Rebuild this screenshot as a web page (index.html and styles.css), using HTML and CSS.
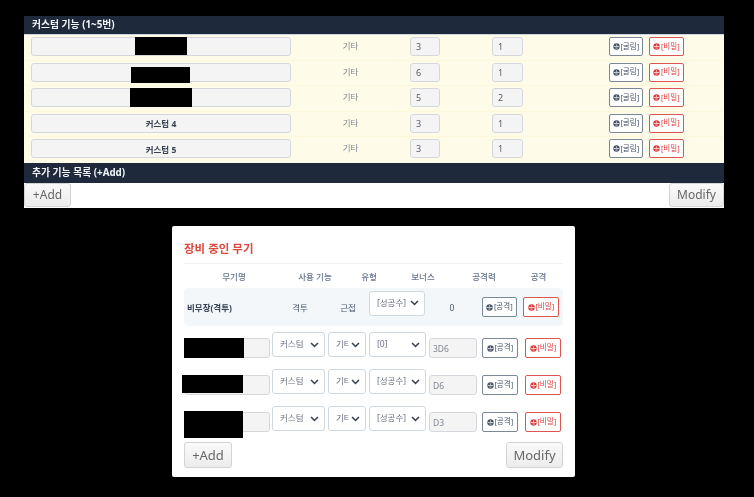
FILE: index.html
```html
<!DOCTYPE html>
<html lang="ko">
<head>
<meta charset="utf-8">
<title>장비 중인 무기</title>
<link rel="stylesheet" href="styles.css">
</head>
<body>
<svg class="defs" width="0" height="0" aria-hidden="true"><defs>
<symbol id="ico" viewBox="0 0 10 10"><circle cx="5" cy="5" r="4.6" fill="currentColor"/><path d="M1 5h8M5 2v2M3.5 7.2h3" stroke="#fff" stroke-width="1"/></symbol>
</defs></svg>

<section class="panel-top">
  <h2 class="bar">커스텀 기능 (1~5번)</h2>
  <div class="rows">
    <div class="row">
      <div class="name-cell"><input class="name" value=""><span class="mask m1"></span></div>
      <span class="kind">기타</span>
      <input class="num n1" value="3"><input class="num n2" value="1">
      <span class="acts"><button class="act plain"><svg class="i"><use href="#ico"/></svg>[굴림]</button><button class="act secret"><svg class="i"><use href="#ico"/></svg>[비밀]</button></span>
    </div>
    <div class="row">
      <div class="name-cell"><input class="name" value=""><span class="mask m2"></span></div>
      <span class="kind">기타</span>
      <input class="num n1" value="6"><input class="num n2" value="1">
      <span class="acts"><button class="act plain"><svg class="i"><use href="#ico"/></svg>[굴림]</button><button class="act secret"><svg class="i"><use href="#ico"/></svg>[비밀]</button></span>
    </div>
    <div class="row">
      <div class="name-cell"><input class="name" value=""><span class="mask m3"></span></div>
      <span class="kind">기타</span>
      <input class="num n1" value="5"><input class="num n2" value="2">
      <span class="acts"><button class="act plain"><svg class="i"><use href="#ico"/></svg>[굴림]</button><button class="act secret"><svg class="i"><use href="#ico"/></svg>[비밀]</button></span>
    </div>
    <div class="row">
      <div class="name-cell"><input class="name" value="커스텀 4"></div>
      <span class="kind">기타</span>
      <input class="num n1" value="3"><input class="num n2" value="1">
      <span class="acts"><button class="act plain"><svg class="i"><use href="#ico"/></svg>[굴림]</button><button class="act secret"><svg class="i"><use href="#ico"/></svg>[비밀]</button></span>
    </div>
    <div class="row">
      <div class="name-cell"><input class="name" value="커스텀 5"></div>
      <span class="kind">기타</span>
      <input class="num n1" value="3"><input class="num n2" value="1">
      <span class="acts"><button class="act plain"><svg class="i"><use href="#ico"/></svg>[굴림]</button><button class="act secret"><svg class="i"><use href="#ico"/></svg>[비밀]</button></span>
    </div>
  </div>
  <h2 class="bar bar2">추가 기능 목록 (+Add)</h2>
  <div class="foot-top"><button class="flat">+Add</button><button class="flat">Modify</button></div>
</section>

<section class="panel-weapons">
  <h2 class="title">장비 중인 무기</h2>
  <div class="grid head">
    <span class="h-name">무기명</span><span class="h-use">사용 기능</span><span class="h-type">유형</span><span class="h-bonus">보너스</span><span class="h-power">공격력</span><span class="h-atk">공격</span>
  </div>
  <div class="first">
    <strong class="w-name">비무장(격투)</strong><span class="w-use">격투</span><span class="w-type">근접</span>
    <select class="sel s-bonus"><option>[성공수]</option></select>
    <span class="w-power">0</span>
    <button class="act plain big"><svg class="i"><use href="#ico"/></svg>[공격]</button>
    <button class="act secret big"><svg class="i"><use href="#ico"/></svg>[비밀]</button>
  </div>
  <div class="wrow r1">
    <div class="wname"><input class="name2"><span class="mask w1"></span></div>
    <select class="sel s-use"><option>커스텀</option></select><select class="sel s-type"><option>기타</option></select><select class="sel s-b2"><option>[0]</option></select>
    <input class="dmg" value="3D6">
    <button class="act plain big"><svg class="i"><use href="#ico"/></svg>[공격]</button>
    <button class="act secret big"><svg class="i"><use href="#ico"/></svg>[비밀]</button>
  </div>
  <div class="wrow r2">
    <div class="wname"><input class="name2"><span class="mask w2"></span></div>
    <select class="sel s-use"><option>커스텀</option></select><select class="sel s-type"><option>기타</option></select><select class="sel s-b2"><option>[성공수]</option></select>
    <input class="dmg" value="D6">
    <button class="act plain big"><svg class="i"><use href="#ico"/></svg>[공격]</button>
    <button class="act secret big"><svg class="i"><use href="#ico"/></svg>[비밀]</button>
  </div>
  <div class="wrow r3">
    <div class="wname"><input class="name2"><span class="mask w3"></span></div>
    <select class="sel s-use"><option>커스텀</option></select><select class="sel s-type"><option>기타</option></select><select class="sel s-b2"><option>[성공수]</option></select>
    <input class="dmg" value="D3">
    <button class="act plain big"><svg class="i"><use href="#ico"/></svg>[공격]</button>
    <button class="act secret big"><svg class="i"><use href="#ico"/></svg>[비밀]</button>
  </div>
  <div class="foot-w"><button class="flat large">+Add</button><button class="flat large">Modify</button></div>
</section>
</body>
</html>
```
FILE: styles.css
```css
* { box-sizing: border-box; }
html, body { margin: 0; padding: 0; }
body {
  background: #000;
  height: 497px;
  overflow: hidden;
  font-family: "Noto Sans", "Noto Sans CJK KR", sans-serif;
  padding-top: 16px;
}
.defs { position: absolute; }
input, select, button { font-family: inherit; margin: 0; outline: none; }

/* top panel */
.panel-top { width: 700px; margin-left: 24px; background: #fff; filter: blur(0.3px); }
.bar {
  margin: 0; height: 18px; line-height: 17px; padding-left: 8px;
  background: #1e293b; color: #f1f5f9;
  font-size: 9.8px; font-weight: 700;
}
.bar2 { height: 20px; line-height: 19px; }
.rows { background: #fefce8; border-top: 1px solid #cbd5e1; }
.row {
  display: flex; align-items: flex-start;
  height: 25.5px; padding: 2px 0 0 7px;
  border-bottom: 1px solid #fdf8d8;
}
.row:last-child { border-bottom: 0; }
.name-cell { position: relative; width: 260px; flex: none; }
.name {
  display: block; width: 100%; height: 19px; padding: 0;
  background: #f4f4f4; border: 1px solid #d4d7db; border-radius: 3px;
  text-align: center; font-size: 8.5px; font-weight: 700; color: #374151;
}
.mask { position: absolute; background: #000; }
.m1 { left: 104px; top: 0; width: 52px; height: 18px; }
.m2 { left: 100px; top: 4px; width: 59px; height: 16px; }
.m3 { left: 99px; top: 0; width: 62px; height: 19px; }
.kind { width: 119px; line-height: 17px; text-align: center; font-size: 8.5px; color: #808690; flex: none; }
.num {
  flex: none; height: 19px; padding: 0 0 0 5px;
  background: #f4f4f4; border: 1px solid #d4d7db; border-radius: 3px;
  font-size: 9px; color: #555c66;
}
.n1 { width: 30px; }
.n2 { width: 31px; margin-left: 52px; }
.acts { display: flex; gap: 6px; margin-left: 86px; }
.act {
  display: inline-flex; align-items: center; justify-content: center;
  width: 34px; height: 19px; padding: 0;
  background: #fff; border: 1px solid #7b8898; border-radius: 2px;
  font-size: 7.5px; line-height: 1; color: #475569; white-space: nowrap;
}
.act.secret { width: 35px; border-color: #dd5550; color: #dc3c3c; }
.i { width: 7px; height: 7px; flex: none; margin-right: 0.5px; }
.plain .i { color: #475569; }
.foot-top { display: flex; justify-content: space-between; height: 25.5px; }
.flat {
  background: linear-gradient(#fafafa, #ececec);
  border: 1px solid #d4d4d4; border-radius: 3px;
  color: #666; font-size: 12px; height: 24px; padding: 0;
}
.foot-top .flat:first-child { width: 47px; }
.foot-top .flat:last-child { width: 55px; }

/* weapons panel */
.panel-weapons {
  width: 403px; height: 251px; margin: 18px 0 0 172px;
  background: #fff; border-radius: 2px; padding: 0 12px;
  filter: blur(0.3px);
}
.title {
  margin: 0; height: 38px; padding-top: 14px;
  border-bottom: 1px solid #eef0f3;
  font-size: 11.5px; line-height: 17px; font-weight: 700; color: #dc4a3d;
}
.grid { display: grid; }
.head {
  grid-template-columns: 100px 62px 46px 62px 60px 49px;
  height: 24px; align-items: center; text-align: center;
  font-size: 8.5px; color: #64748b; font-weight: 500;
}
.first {
  display: flex; align-items: center; height: 38px;
  background: #f4f7fa; border-radius: 4px; padding-left: 3px;
  font-size: 8.5px; color: #475569;
}
.w-name { width: 96px; font-weight: 700; color: #334155; }
.w-use { width: 30px; text-align: center; margin-left: 2px; }
.w-type { width: 20px; margin-left: 23px; text-align: center; }
.sel {
  appearance: none; -webkit-appearance: none; flex: none;
  background: #fff url("data:image/svg+xml,%3Csvg xmlns='http://www.w3.org/2000/svg' viewBox='0 0 10 7'%3E%3Cpath d='M1 1.2l4 4 4-4' fill='none' stroke='%23374151' stroke-width='1.9'/%3E%3C/svg%3E") no-repeat right 5px center / 9px 6px;
  border: 1px solid #d1d9e0; border-radius: 3px;
  font-size: 8.5px; color: #6b7280;
  height: 25px; padding: 0 16px 2px 7px;
}
.s-bonus { width: 56px; margin-left: 11px; margin-top: -8px; }
.w-power { width: 54px; text-align: center; }
.first .plain { margin-left: 3px; }
.first .secret { margin-left: 6px; }
.act.big { width: 35px; height: 20px; }
.act.big.secret { width: 36px; }
.wrow { display: flex; align-items: flex-start; height: 37px; }
.r1 { margin-top: 6px; }
.wname { position: relative; width: 86px; margin-top: 6px; flex: none; }
.name2 {
  display: block; width: 100%; height: 20px; padding: 0;
  background: #f4f4f4; border: 1px solid #d4d7db; border-radius: 3px;
}
.w1 { left: 0; top: 0; width: 60px; height: 20px; }
.w2 { left: -2px; top: 0; width: 61px; height: 18px; }
.w3 { left: 0; top: -1px; width: 59px; height: 27px; }
.s-use { width: 53px; margin-left: 2px; }
.s-type { width: 38px; margin-left: 3px; }
.s-b2 { width: 57px; margin-left: 3px; }
.dmg {
  flex: none; width: 48px; height: 20px; margin: 6px 0 0 3px; padding: 0 0 0 3px;
  background: #f4f4f4; border: 1px solid #d4d7db; border-radius: 3px;
  font-size: 8.5px; color: #808690;
}
.wrow .plain { margin: 6px 0 0 5px; width: 36px; }
.wrow .secret { margin: 6px 0 0 7px; width: 35px; }
.foot-w { display: flex; justify-content: space-between; margin-top: -1px; }
.flat.large { height: 26px; font-size: 13px; }
.foot-w .flat:first-child { width: 48px; }
.foot-w .flat:last-child { width: 57px; }
```
